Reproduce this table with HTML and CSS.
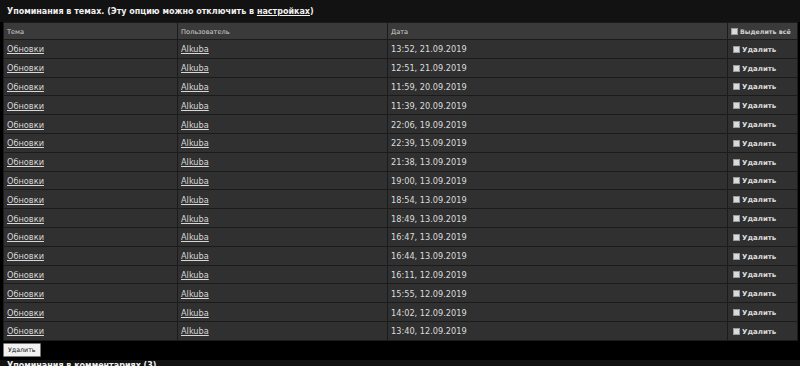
FILE: index.html
```html
<!DOCTYPE html>
<html lang="ru">
<head>
<meta charset="utf-8">
<title>Упоминания</title>
<link rel="stylesheet" href="styles.css">
</head>
<body>
<section class="block">
  <h2 class="block-title">Упоминания в темах. (Эту опцию можно отключить в <a href="#">настройках</a>)</h2>
  <table class="list">
    <colgroup>
      <col class="c-topic"><col class="c-user"><col class="c-date"><col class="c-act">
    </colgroup>
    <thead>
      <tr><th>Тема</th><th>Пользователь</th><th>Дата</th><th class="act"><span class="cb"></span>Выделить всё</th></tr>
    </thead>
    <tbody>
      <tr><td><a href="#">Обновки</a></td><td><a href="#">Alkuba</a></td><td>13:52, 21.09.2019</td><td class="act"><span class="cb"></span>Удалить</td></tr>
      <tr><td><a href="#">Обновки</a></td><td><a href="#">Alkuba</a></td><td>12:51, 21.09.2019</td><td class="act"><span class="cb"></span>Удалить</td></tr>
      <tr><td><a href="#">Обновки</a></td><td><a href="#">Alkuba</a></td><td>11:59, 20.09.2019</td><td class="act"><span class="cb"></span>Удалить</td></tr>
      <tr><td><a href="#">Обновки</a></td><td><a href="#">Alkuba</a></td><td>11:39, 20.09.2019</td><td class="act"><span class="cb"></span>Удалить</td></tr>
      <tr><td><a href="#">Обновки</a></td><td><a href="#">Alkuba</a></td><td>22:06, 19.09.2019</td><td class="act"><span class="cb"></span>Удалить</td></tr>
      <tr><td><a href="#">Обновки</a></td><td><a href="#">Alkuba</a></td><td>22:39, 15.09.2019</td><td class="act"><span class="cb"></span>Удалить</td></tr>
      <tr><td><a href="#">Обновки</a></td><td><a href="#">Alkuba</a></td><td>21:38, 13.09.2019</td><td class="act"><span class="cb"></span>Удалить</td></tr>
      <tr><td><a href="#">Обновки</a></td><td><a href="#">Alkuba</a></td><td>19:00, 13.09.2019</td><td class="act"><span class="cb"></span>Удалить</td></tr>
      <tr><td><a href="#">Обновки</a></td><td><a href="#">Alkuba</a></td><td>18:54, 13.09.2019</td><td class="act"><span class="cb"></span>Удалить</td></tr>
      <tr><td><a href="#">Обновки</a></td><td><a href="#">Alkuba</a></td><td>18:49, 13.09.2019</td><td class="act"><span class="cb"></span>Удалить</td></tr>
      <tr><td><a href="#">Обновки</a></td><td><a href="#">Alkuba</a></td><td>16:47, 13.09.2019</td><td class="act"><span class="cb"></span>Удалить</td></tr>
      <tr><td><a href="#">Обновки</a></td><td><a href="#">Alkuba</a></td><td>16:44, 13.09.2019</td><td class="act"><span class="cb"></span>Удалить</td></tr>
      <tr><td><a href="#">Обновки</a></td><td><a href="#">Alkuba</a></td><td>16:11, 12.09.2019</td><td class="act"><span class="cb"></span>Удалить</td></tr>
      <tr><td><a href="#">Обновки</a></td><td><a href="#">Alkuba</a></td><td>15:55, 12.09.2019</td><td class="act"><span class="cb"></span>Удалить</td></tr>
      <tr><td><a href="#">Обновки</a></td><td><a href="#">Alkuba</a></td><td>14:02, 12.09.2019</td><td class="act"><span class="cb"></span>Удалить</td></tr>
      <tr><td><a href="#">Обновки</a></td><td><a href="#">Alkuba</a></td><td>13:40, 12.09.2019</td><td class="act"><span class="cb"></span>Удалить</td></tr>
    </tbody>
  </table>
  <div class="actions"><button class="btn" type="button">Удалить</button></div>
</section>
<section class="block">
  <h2 class="block-title">Упоминания в комментариях (3)</h2>
</section>
</body>
</html>
```

FILE: styles.css
```css
* { box-sizing: border-box; }
html, body { margin: 0; padding: 0; background: #000; }
body {
  font-family: "DejaVu Sans", Verdana, sans-serif;
  color: #d8d8d8;
  overflow: hidden;
}
a { color: #d8d8d8; text-decoration: underline; }

.block-title {
  margin: 0;
  background: #121212;
  color: #f0f0f0;
  font-size: 8px;
  font-weight: bold;
  line-height: 12px;
  padding: 6px 7px 4px;
  height: 22px;
}
.block-title a { color: #f0f0f0; }
.block + .block .block-title { padding-top: 0; }

.list {
  border-collapse: collapse;
  table-layout: fixed;
  width: 794px;
  margin-left: 3px;
}
.c-topic { width: 174px; }
.c-user { width: 210px; }
.c-date { width: 340px; }
.c-act { width: 70px; }

.list th, .list td {
  border: 1px solid #1b1b1b;
  text-align: left;
  padding: 0 3px;
  white-space: nowrap;
  overflow: hidden;
}
.list th {
  background: #3a3a3a;
  height: 17px;
  font-size: 6.6px;
  font-weight: normal;
  color: #d0d0d0;
  padding-top: 1px;
}
.list td {
  background: #303030;
  height: 18.8px;
  font-size: 8.2px;
  color: #dcdcdc;
  padding-top: 1px;
}
.list th.act {
  font-weight: bold;
  font-size: 6.3px;
  padding-left: 3px;
}
.list td.act {
  font-weight: bold;
  font-size: 7px;
  padding-left: 5px;
  padding-top: 2px;
}
.cb {
  display: inline-block;
  width: 7px;
  height: 7px;
  background: #dadada;
  border: 1px solid #9a9a9a;
  margin-right: 2px;
  vertical-align: -1px;
}

.actions {
  padding: 2px 3px 0;
  height: 19px;
}
.btn {
  display: block;
  font-family: "DejaVu Sans", Verdana, sans-serif;
  font-size: 6.3px;
  padding: 0 4px;
  height: 14px;
  background: #f2f2f2;
  color: #111;
  border: 1px solid #777;
  border-radius: 1px;
}
```
